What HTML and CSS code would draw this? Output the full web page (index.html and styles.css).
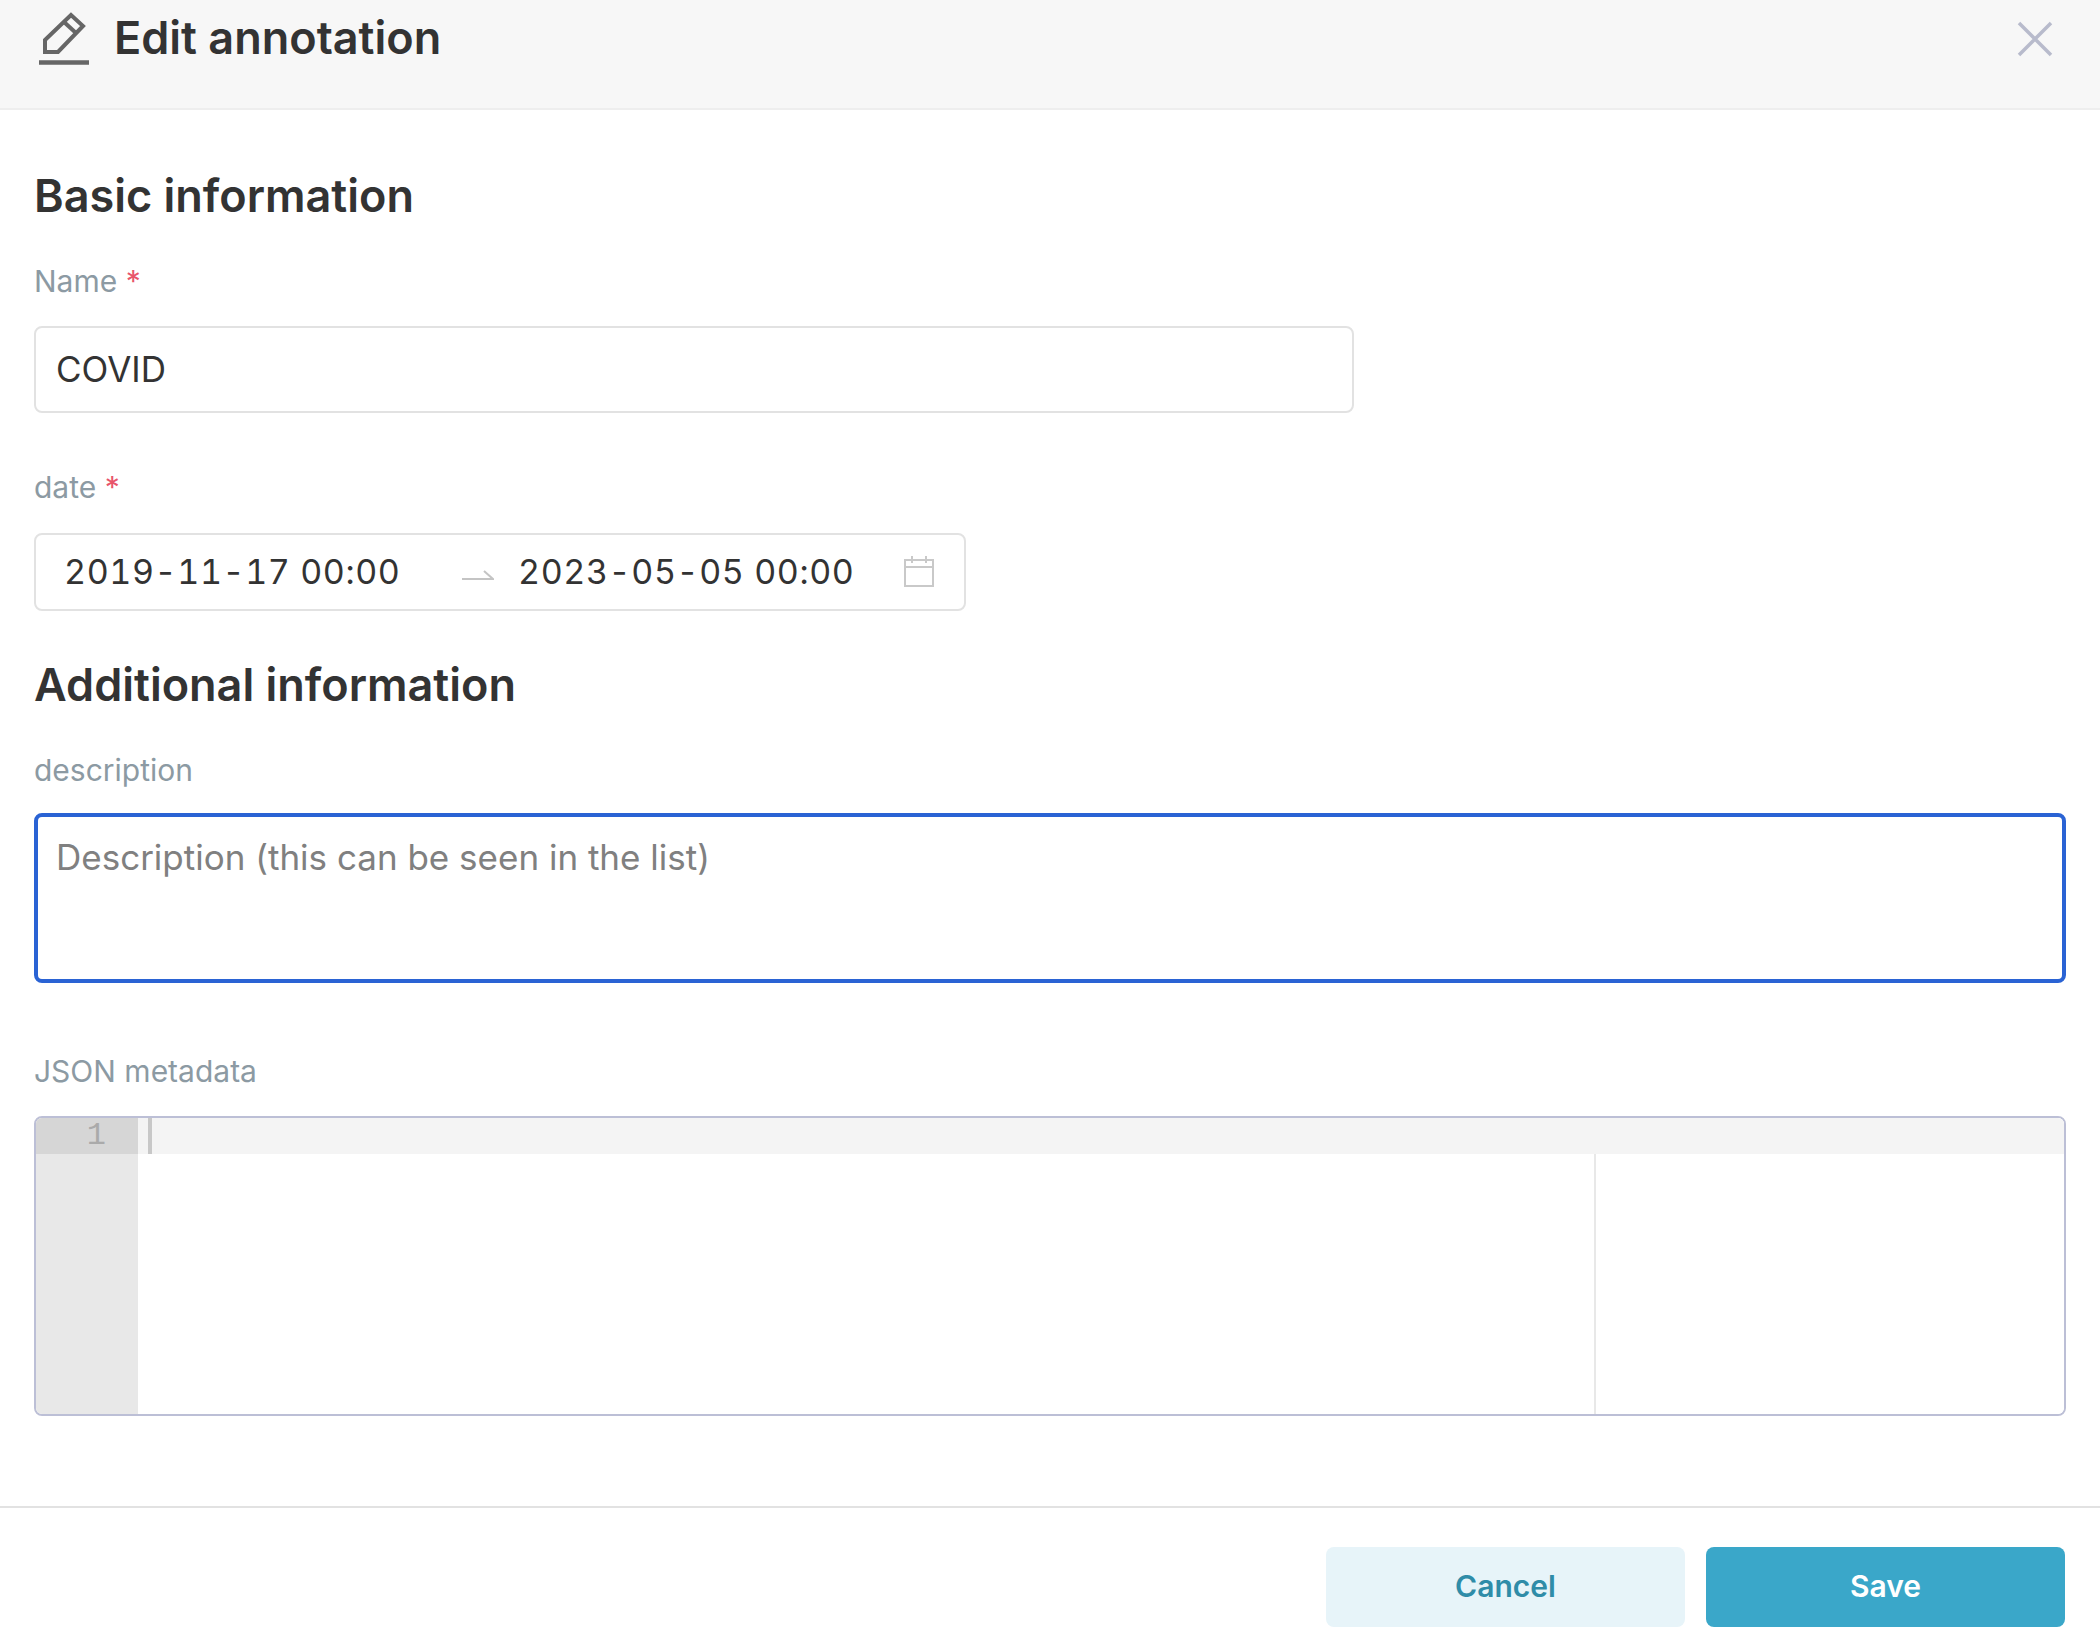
FILE: index.html
```html
<!DOCTYPE html>
<html lang="en">
<head>
    <meta charset="UTF-8">
    <meta name="viewport" content="width=device-width, initial-scale=1.0">
    <title>Edit annotation</title>
    <link rel="stylesheet" href="styles.css">
</head>
<body>
    <div class="modal">
        <header class="modal-header">
            <div class="modal-title">
                <svg class="pencil-icon" width="52" height="54" viewBox="0 0 52 54" fill="none" stroke="#666" stroke-width="4">
                    <path d="M7 28 L33 3 L45 14 L20 40 L7 40 Z"/>
                    <path d="M26 10 L38 21"/>
                    <path d="M1 50.5 H51" stroke-width="4.5"/>
                </svg>
                <h1>Edit annotation</h1>
            </div>
            <svg class="close-icon" width="36" height="36" viewBox="0 0 36 36" fill="none" stroke="#b8bbcc" stroke-width="3.5">
                <path d="M2 2 L34 34 M34 2 L2 34"/>
            </svg>
        </header>

        <main class="modal-body">
            <h2 class="section-title">Basic information</h2>
            <label class="field-label">Name <span class="required">*</span></label>
            <div class="text-input">COVID</div>

            <label class="field-label date-label">date <span class="required">*</span></label>
            <div class="date-range">
                <span class="date-value">2019-11-17 00:00</span>
                <svg class="swap-arrow" width="32" height="14" viewBox="0 0 32 14" fill="none" stroke="#c4c4c4" stroke-width="2">
                    <path d="M0 11 H31 L22 3"/>
                </svg>
                <span class="date-value">2023-05-05 00:00</span>
                <svg class="calendar-icon" width="30" height="32" viewBox="0 0 30 32" fill="none" stroke="#c9c9c9" stroke-width="2">
                    <rect x="1" y="5" width="28" height="26"/>
                    <path d="M1 12 H29 M8 1 V8 M22 1 V8"/>
                </svg>
            </div>

            <h2 class="section-title additional-title">Additional information</h2>
            <label class="field-label description-label">description</label>
            <div class="textarea-focused">Description (this can be seen in the list)</div>

            <label class="field-label json-label">JSON metadata</label>
            <div class="editor">
                <div class="editor-gutter">
                    <div class="gutter-active">1</div>
                </div>
                <div class="editor-content">
                    <div class="active-line"></div>
                    <div class="print-margin"></div>
                </div>
            </div>
        </main>

        <footer class="modal-footer">
            <button class="btn btn-cancel">Cancel</button>
            <button class="btn btn-save">Save</button>
        </footer>
    </div>
</body>
</html>
```
FILE: styles.css
```css
body {
    margin: 0;
    background-color: #fff;
    font-family: Inter, "Liberation Sans", sans-serif;
    color: #333;
}

.modal {
    width: 2100px;
    height: 1650px;
    display: flex;
    flex-direction: column;
}

.modal-header {
    height: 108px;
    flex: none;
    display: flex;
    justify-content: space-between;
    align-items: flex-start;
    background-color: #f7f7f7;
    border-bottom: 2px solid #eee;
    padding: 0 47px 0 38px;
}

.modal-title {
    display: flex;
    align-items: flex-start;
    gap: 24px;
    padding-top: 12px;
}

.modal-title h1 {
    margin: 0;
    font-size: 45px;
    font-weight: 600;
    line-height: 52px;
}

.close-icon {
    margin-top: 21px;
}

.modal-body {
    flex: 1;
    padding: 0 34px;
}

.section-title {
    margin: 0;
    padding-top: 60px;
    font-size: 45px;
    font-weight: 600;
    line-height: 52px;
}

.additional-title {
    padding-top: 48px;
}

.field-label {
    display: block;
    margin-top: 41px;
    margin-bottom: 27px;
    font-size: 30px;
    line-height: 36px;
    color: #8c9aa3;
}

.date-label {
    margin-top: 56px;
    margin-bottom: 28px;
}

.description-label {
    margin-bottom: 25px;
}

.json-label {
    margin-top: 70px;
}

.required {
    color: #e8556a;
}

.text-input {
    width: 1320px;
    height: 87px;
    box-sizing: border-box;
    padding-left: 20px;
    border: 2px solid #e2e2e2;
    border-radius: 8px;
    font-size: 35px;
    line-height: 83px;
}

.date-range {
    width: 932px;
    height: 78px;
    box-sizing: border-box;
    display: flex;
    align-items: center;
    padding-left: 28px;
    border: 2px solid #e2e2e2;
    border-radius: 8px;
}

.date-value {
    width: 335px;
    flex: none;
    padding-bottom: 2px;
    font-size: 34px;
    font-variant-numeric: tabular-nums;
    letter-spacing: 0.6px;
    white-space: nowrap;
}

.swap-arrow {
    flex: none;
    margin: 6px 24px 0 63px;
}

.calendar-icon {
    flex: none;
    margin-left: 51px;
    margin-bottom: 2px;
}

.textarea-focused {
    height: 170px;
    box-sizing: border-box;
    padding: 16px 18px;
    border: 4px solid #2a63d4;
    border-radius: 8px;
    font-size: 35px;
    line-height: 48px;
    color: #808080;
}

.editor {
    height: 300px;
    box-sizing: border-box;
    display: flex;
    border: 2px solid #bcbfd6;
    border-radius: 8px;
    overflow: hidden;
}

.editor-gutter {
    width: 102px;
    flex: none;
    background-color: #e8e8e8;
}

.gutter-active {
    height: 36px;
    padding-right: 32px;
    background-color: #d6d6d6;
    font-family: "Liberation Mono", monospace;
    font-size: 32px;
    line-height: 36px;
    text-align: right;
    color: #aaa;
}

.editor-content {
    flex: 1;
    position: relative;
    background-color: #fff;
}

.active-line {
    height: 36px;
    background-color: #f4f4f4;
}

/* caret and print margin sit over the editor lines */
.active-line::before {
    content: "";
    position: absolute;
    left: 10px;
    top: 0;
    width: 4px;
    height: 36px;
    background-color: #c8c8c8;
}

.print-margin {
    position: absolute;
    left: 1456px;
    top: 36px;
    bottom: 0;
    width: 2px;
    background-color: #e8e8e8;
}

.modal-footer {
    height: 144px;
    flex: none;
    box-sizing: border-box;
    display: flex;
    justify-content: flex-end;
    gap: 21px;
    padding: 39px 35px 0 0;
    border-top: 2px solid #e2e2e2;
}

.btn {
    width: 359px;
    height: 80px;
    padding-bottom: 3px;
    border: none;
    border-radius: 8px;
    font-family: Inter, "Liberation Sans", sans-serif;
    font-size: 30px;
    font-weight: 600;
}

.btn-cancel {
    background-color: #e7f4f9;
    color: #2f8ca8;
}

.btn-save {
    background-color: #3aa7c9;
    color: #fff;
}
```
